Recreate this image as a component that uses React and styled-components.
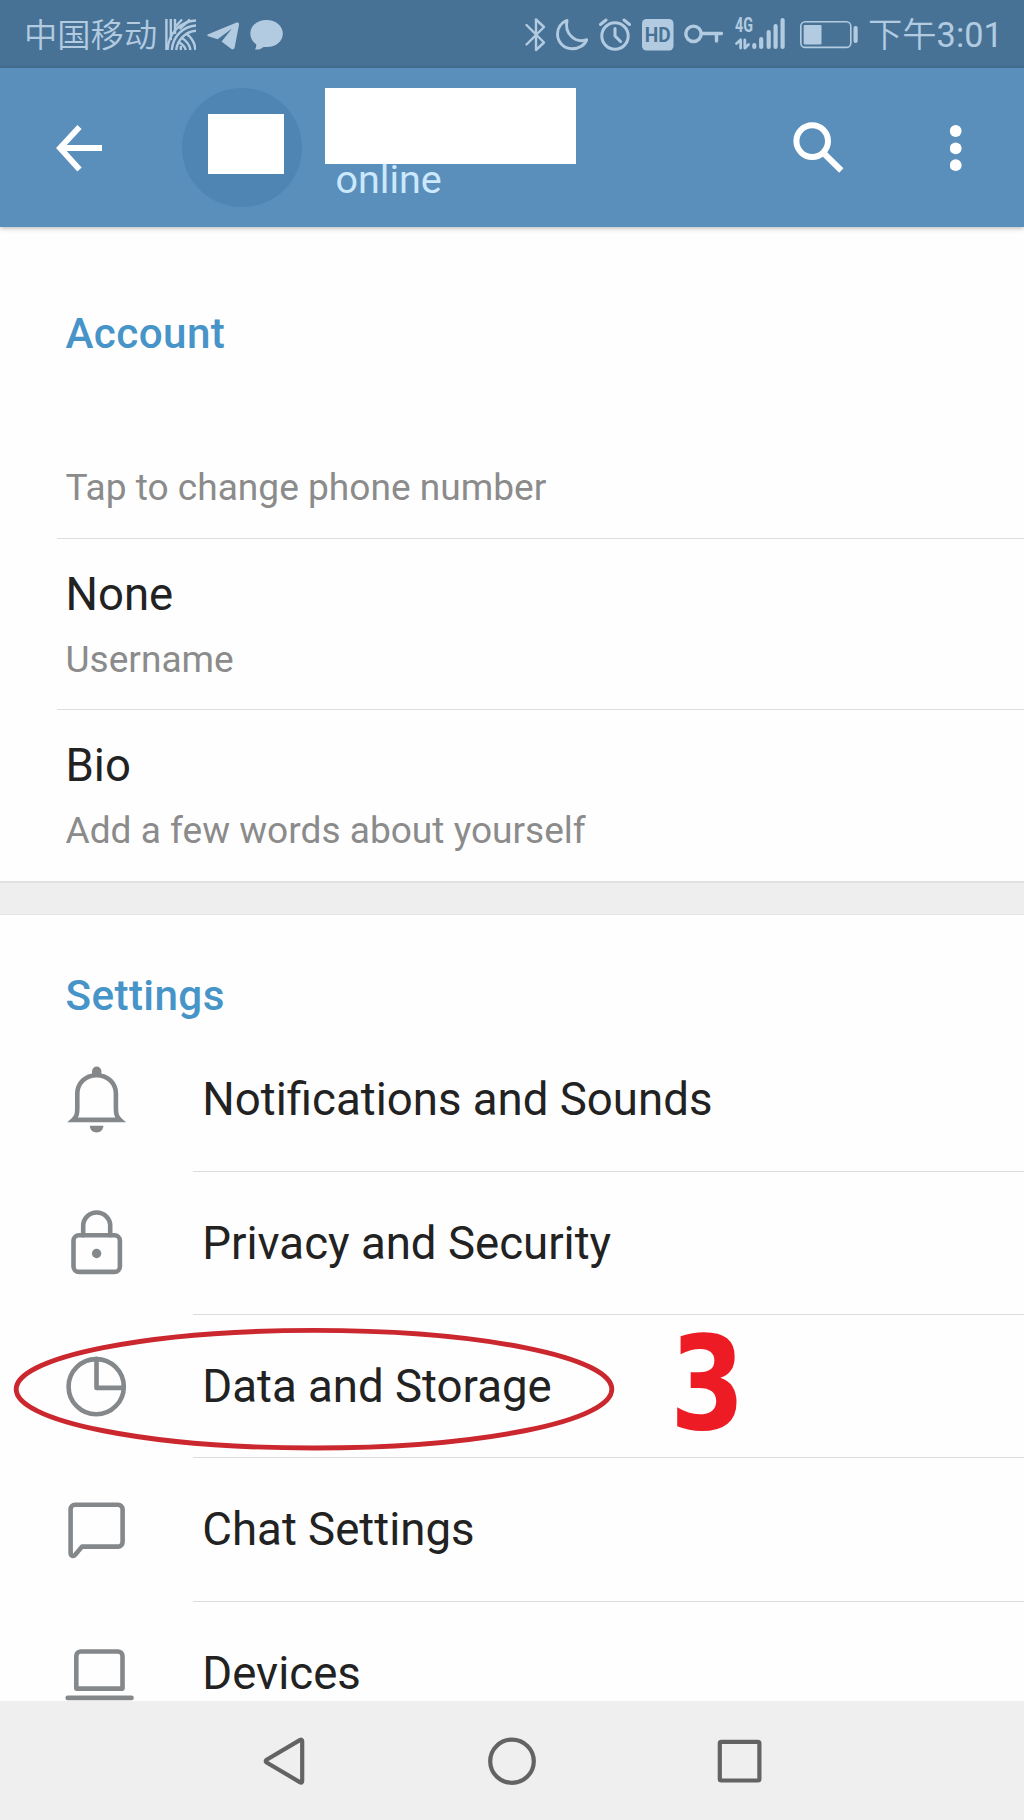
import React from "react";
import styled, { createGlobalStyle } from "styled-components";

const Global = createGlobalStyle`
  * { box-sizing: border-box; }
  body { margin: 0; background: #fefefe; font-family: Roboto, "Noto Sans CJK SC", sans-serif; }
`;

const Screen = styled.div`
  width: 1024px;
  height: 1820px;
  display: flex;
  flex-direction: column;
  overflow: hidden;
  background: #fefefe;
  color: #222;
`;

const StatusBar = styled.header`
  height: 68px;
  flex: none;
  display: flex;
  align-items: center;
  justify-content: space-between;
  padding-left: 24px;
  background: #477296;
  color: #b2cbe0;
`;

const StatusGroup = styled.div`
  display: flex;
  align-items: center;
`;

const Carrier = styled.span`
  width: 141px;
  padding-top: 3px;
  font-size: 33.3px;
  font-weight: 350;
  line-height: 65px;
  white-space: nowrap;
`;

const Clock = styled.span`
  width: 156px;
  margin-left: 9px;
  padding-top: 3px;
  font-size: 34.3px;
  font-weight: 350;
  line-height: 65px;
  white-space: nowrap;
`;

const ClockDigits = styled.span`
  font-weight: 400;
`;

const StatusIcon = styled.svg`
  display: block;
  flex: none;
  width: ${(p) => p.$w}px;
  height: 68px;
  margin-left: ${(p) => p.$gap}px;
`;

const Toolbar = styled.div`
  height: 159px;
  flex: none;
  display: flex;
  align-items: center;
  padding: 0 62px 0 56px;
  background: #5a8fbc;
  color: #fff;
  box-shadow: 0 1px 5px rgba(0, 0, 0, 0.3);
  z-index: 1;
`;

const ToolIcon = styled.svg`
  display: block;
  flex: none;
  width: ${(p) => p.$w}px;
  height: ${(p) => p.$h}px;
`;

const Avatar = styled.div`
  width: 119.5px;
  height: 119.5px;
  margin-left: 80px;
  padding: 26px 0 0 26px;
  border-radius: 50%;
  background: #4f85b3;
`;

const AvatarMask = styled.div`
  width: 76px;
  height: 60px;
  background: #fff;
`;

const Identity = styled.div`
  align-self: stretch;
  flex: 1;
  margin-left: 23.5px;
  padding-top: 20px;
`;

const NameMask = styled.div`
  width: 251px;
  height: 76px;
  background: #fff;
`;

const Presence = styled.div`
  padding-left: 10.5px;
  font-size: 39.5px;
  line-height: 32px;
  color: #cbe8fc;
`;

const Actions = styled.div`
  display: flex;
  align-items: center;
  gap: 106px;
`;

const Content = styled.main`
  flex: 1;
  min-height: 0;
  overflow: hidden;
`;

const SectionTitle = styled.h2`
  margin: 0;
  height: ${(p) => p.$height}px;
  padding: ${(p) => p.$top}px 0 0 65.5px;
  font-size: 42.2px;
  font-weight: 500;
  letter-spacing: 0.4px;
  line-height: 50px;
  color: #4794c8;
`;

const Field = styled.div`
  height: 171.2px;
  margin-left: 57px;
  padding: 26px 0 0 8.5px;
  border-bottom: ${(p) => (p.$last ? "none" : "1px solid #dedede")};
`;

const FieldValue = styled.div`
  height: 60px;
  font-size: 45.5px;
  line-height: 60px;
`;

const FieldHint = styled.div`
  margin-top: 10px;
  font-size: 37.1px;
  line-height: 50px;
  color: #8b8b8b;
`;

const Band = styled.div`
  height: 34px;
  background: #eee;
  border-top: 2px solid #e1e1e1;
  border-bottom: 1px solid #e4e4e4;
`;

const Item = styled.div`
  position: relative;
  display: flex;
  height: 143.3px;
`;

const ItemIcon = styled.svg`
  display: block;
  flex: none;
  width: 80px;
  height: 80px;
  margin: 31px 57px 0 56px;
  fill: none;
  stroke: #84888b;
  stroke-width: 4.6;
  stroke-linejoin: round;
  stroke-linecap: round;
`;

const ItemLabel = styled.div`
  flex: 1;
  padding: 2px 0 0 9.3px;
  font-size: 45.6px;
  line-height: 140.6px;
  border-bottom: 1px solid #dcdcdc;
`;

const Ring = styled.svg`
  position: absolute;
  left: 10px;
  top: 9px;
  width: 608px;
  height: 130px;
`;

const Step = styled.span`
  position: absolute;
  left: 670px;
  top: 4.4px;
  font-family: "DejaVu Sans", sans-serif;
  font-size: 130px;
  font-weight: 700;
  line-height: 130px;
  color: #ed1c24;
  transform: scaleX(0.83);
  transform-origin: left;
`;

const NavBar = styled.nav`
  height: 119px;
  flex: none;
  display: flex;
  align-items: center;
  justify-content: space-between;
  padding: 0 260px 0 260px;
  background: #efefef;
`;

const NavIcon = styled.svg`
  display: block;
  width: 50px;
  height: 52px;
  fill: none;
  stroke: #636363;
  stroke-width: 4.2;
  stroke-linejoin: round;
`;

const line = { fill: "none", stroke: "currentColor", strokeLinecap: "round", strokeLinejoin: "round" };

function CarrierGlyphs() {
  return (
    <>
      <StatusIcon $w={31} $gap={0} viewBox="165 0 31 68">
        <g {...line} strokeWidth="2.4" strokeLinecap="butt">
          <path d="M166.4 19V50M170.8 19V40M175 19V34M175 27 182 19.5M179.5 29 190 19.5" />
          <path d="M196 20.5C180 21.5 168.5 33 167.5 50M196 25.5C183 26.5 173 36 171.8 50M196 30.7C186 31.5 177.5 39 176.2 50" />
          <path d="M181 37.5C185.5 40 189.5 44 190.5 50M186 33.5C191 37 195 43 195.5 50M178.5 42C182 44 185 46.5 185.8 50M180.8 50V46" />
        </g>
      </StatusIcon>
      <StatusIcon $w={32} $gap={11} viewBox="207 0 32 68" fill="currentColor">
        <path d="M208.2 34.2 236.6 22.6C238.3 22 239.4 22.9 239 24.8L234.7 47.2C234.3 49.3 232.8 49.9 231 48.7L221.6 41.6 232 28.6 217.6 39.2 208.3 36.2C206.9 35.8 206.9 34.8 208.2 34.2Z" />
      </StatusIcon>
      <StatusIcon $w={33} $gap={11} viewBox="250 0 33 68" fill="currentColor">
        <path d="M266.5 20C257 20 250.3 26 250.3 33.6C250.3 38 252.5 41.8 256.2 44.3C256.5 46.2 255.8 47.9 255 49.5C258.5 49.9 261.5 48.6 263.5 46.9C275.5 48.3 282.8 41.6 282.8 33.6C282.8 26 276 20 266.5 20Z" />
      </StatusIcon>
    </>
  );
}

function SystemGlyphs() {
  return (
    <>
      <StatusIcon $w={22} $gap={0} viewBox="524 0 22 68">
        <path {...line} strokeWidth="2.4" d="M526.5 25 544 42.5 536 50V19.5L544 27 526.5 44.5" />
      </StatusIcon>
      <StatusIcon $w={33} $gap={10} viewBox="556 0 33 68">
        <path {...line} strokeWidth="2.9" d="M567 20.5C561 22.5 557.5 28 557.5 34C557.5 42.3 564 48.7 572 48.7C579 48.7 585 45 586.7 39.7C576 43.5 564 34.5 567 20.5Z" />
      </StatusIcon>
      <StatusIcon $w={33} $gap={10} viewBox="599 0 33 68">
        <g {...line} strokeWidth="3">
          <circle cx="615" cy="36" r="13.2" />
          <path d="M615 28.5V36L620.5 41.5M600.5 24.5 606 20M629.5 24.5 624 20" />
        </g>
      </StatusIcon>
      <StatusIcon $w={32} $gap={10} viewBox="642 0 32 68">
        <rect x="642" y="19" width="31.5" height="31.5" rx="4.5" fill="currentColor" />
        <text x="657.7" y="42" textAnchor="middle" fontSize="20.5" fontWeight="700" fontFamily="Roboto, sans-serif" fill="#477296" textLength="26" lengthAdjust="spacingAndGlyphs">HD</text>
      </StatusIcon>
      <StatusIcon $w={40} $gap={10} viewBox="684 0 40 68">
        <g {...line} strokeWidth="3.4">
          <circle cx="693.5" cy="33.8" r="7.7" />
          <path d="M702 33.5H721.5M716.5 34V41" />
        </g>
      </StatusIcon>
      <StatusIcon $w={51} $gap={10} viewBox="734 0 51 68">
        <text x="735" y="32" fontSize="19.5" fontWeight="700" fontFamily="Roboto, sans-serif" fill="currentColor" textLength="18" lengthAdjust="spacingAndGlyphs">4G</text>
        <path {...line} strokeWidth="2.8" d="M740.6 40V48M740.4 40 736.5 43.5M744.8 40V48M745 48 748.5 44.5" />
        <g {...line} strokeWidth="4.2">
          <path d="M754.3 45V47M761.2 39V47M768.7 32V47M775.6 26V47M782.6 20V47" />
        </g>
      </StatusIcon>
      <StatusIcon $w={59} $gap={15} viewBox="800 0 59 68">
        <rect {...line} x="800.8" y="21.8" width="50" height="25.6" rx="4.5" strokeWidth="1.6" />
        <rect x="803.7" y="25" width="17.8" height="19.5" rx="1" fill="currentColor" />
        <rect x="853.5" y="26" width="4.2" height="17" rx="2" fill="currentColor" />
      </StatusIcon>
    </>
  );
}

const icons = {
  bell: (
    <>
      <path strokeLinejoin="miter" strokeLinecap="butt" d="M96.6 1075.7C85 1075.7 77.3 1084 77.3 1094.5V1108C77.3 1114 77 1117 73.2 1120.4H120C116.2 1117 115.9 1114 115.9 1108V1094.5C115.9 1084 108.2 1075.7 96.6 1075.7Z" />
      <path d="M92 1076V1072A4.7 5 0 0 1 101.4 1072V1076Z" fill="#84888b" stroke="none" />
      <path d="M89.7 1126.3H103.5C103 1130.5 100.5 1133 96.6 1133S90.2 1130.5 89.7 1126.3Z" fill="#84888b" stroke="none" />
    </>
  ),
  lock: (
    <>
      <rect x="73.5" y="1235" width="46.4" height="36.7" rx="5.5" />
      <path d="M83.2 1235V1225.5A13.5 13.2 0 0 1 110.2 1225.5V1235" />
      <circle cx="96.6" cy="1253.3" r="4.7" fill="#84888b" stroke="none" />
    </>
  ),
  pie: (
    <>
      <circle cx="96.2" cy="1386.8" r="27.6" />
      <path d="M96.5 1359V1388H123.5" />
    </>
  ),
  chat: (
    <path d="M75 1505.2H118A4.5 4.5 0 0 1 122.6 1509.7V1542.5A4.5 4.5 0 0 1 118 1547H82L75.2 1555.2C73.5 1557.2 70.6 1556.5 70.6 1553.5V1509.7A4.5 4.5 0 0 1 75 1505.2Z" />
  ),
  laptop: (
    <>
      <path d="M76.3 1688.3V1655.5A4.5 4.5 0 0 1 80.8 1651.2H118A4.5 4.5 0 0 1 122.5 1655.5V1688.3Z" />
      <path d="M67.7 1697.6H131.5" />
    </>
  ),
};

const items = [
  { icon: "bell", label: "Notifications and Sounds", top: 1059.5 },
  { icon: "lock", label: "Privacy and Security", top: 1202.8 },
  { icon: "pie", label: "Data and Storage", top: 1346.1, marked: true },
  { icon: "chat", label: "Chat Settings", top: 1489.4 },
  { icon: "laptop", label: "Devices", top: 1632.7 },
];

const fields = [
  { value: "", hint: "Tap to change phone number" },
  { value: "None", hint: "Username" },
  { value: "Bio", hint: "Add a few words about yourself" },
];

export default function App() {
  return (
    <>
      <Global />
      <Screen>
        <StatusBar>
          <StatusGroup>
            <Carrier>中国移动</Carrier>
            <CarrierGlyphs />
          </StatusGroup>
          <StatusGroup>
            <SystemGlyphs />
            <Clock>下午<ClockDigits>3:01</ClockDigits></Clock>
          </StatusGroup>
        </StatusBar>
        <Toolbar>
          <ToolIcon $w={46} $h={52} viewBox="0 0 46 52" fill="none" stroke="#fff" strokeWidth="5.8">
            <path d="M23.5 5 4 26 23.5 47.5M4 26H46" />
          </ToolIcon>
          <Avatar>
            <AvatarMask />
          </Avatar>
          <Identity>
            <NameMask />
            <Presence>online</Presence>
          </Identity>
          <Actions>
            <ToolIcon $w={51} $h={52} viewBox="793 121.5 51 52" fill="none" stroke="#fff" strokeWidth="6">
              <circle cx="812.2" cy="140.6" r="15.8" />
              <path d="M824.5 153.5 841.3 170" />
            </ToolIcon>
            <ToolIcon $w={12} $h={48} viewBox="0 0 12 48" fill="#fff">
              <circle cx="5.7" cy="7" r="5.9" />
              <circle cx="5.7" cy="24.3" r="5.9" />
              <circle cx="5.7" cy="41.2" r="5.9" />
            </ToolIcon>
          </Actions>
        </Toolbar>
        <Content>
          <SectionTitle $height={140.4} $top={81.5}>Account</SectionTitle>
          {fields.map((f, i) => (
            <Field key={f.hint} $last={i === fields.length - 1}>
              <FieldValue>{f.value}</FieldValue>
              <FieldHint>{f.hint}</FieldHint>
            </Field>
          ))}
          <Band />
          <SectionTitle $height={113.5} $top={55.8}>Settings</SectionTitle>
          {items.map((it) => (
            <Item key={it.icon}>
              <ItemIcon viewBox={`56 ${it.top} 80 80`}>{icons[it.icon]}</ItemIcon>
              <ItemLabel>{it.label}</ItemLabel>
              {it.marked && (
                <>
                  <Ring viewBox="10 1324.5 608 130">
                    <ellipse cx="314" cy="1389.7" rx="297.8" ry="58.8" fill="none" stroke="#cb272e" strokeWidth="4.9" />
                  </Ring>
                  <Step>3</Step>
                </>
              )}
            </Item>
          ))}
        </Content>
        <NavBar>
          <NavIcon viewBox="260 1734.5 50 52">
            <path d="M302.2 1740.8V1780.6Q302.2 1783 299.8 1781.6L266.6 1762Q264.8 1760.6 266.6 1759.3L299.8 1739.6Q302.2 1738.4 302.2 1740.8Z" />
          </NavIcon>
          <NavIcon viewBox="487 1734.5 50 52">
            <ellipse cx="512" cy="1760.7" rx="21.8" ry="21.6" />
          </NavIcon>
          <NavIcon viewBox="714 1734.5 50 52">
            <rect x="719.8" y="1741.4" width="39.6" height="38.6" rx="1.5" />
          </NavIcon>
        </NavBar>
      </Screen>
    </>
  );
}
